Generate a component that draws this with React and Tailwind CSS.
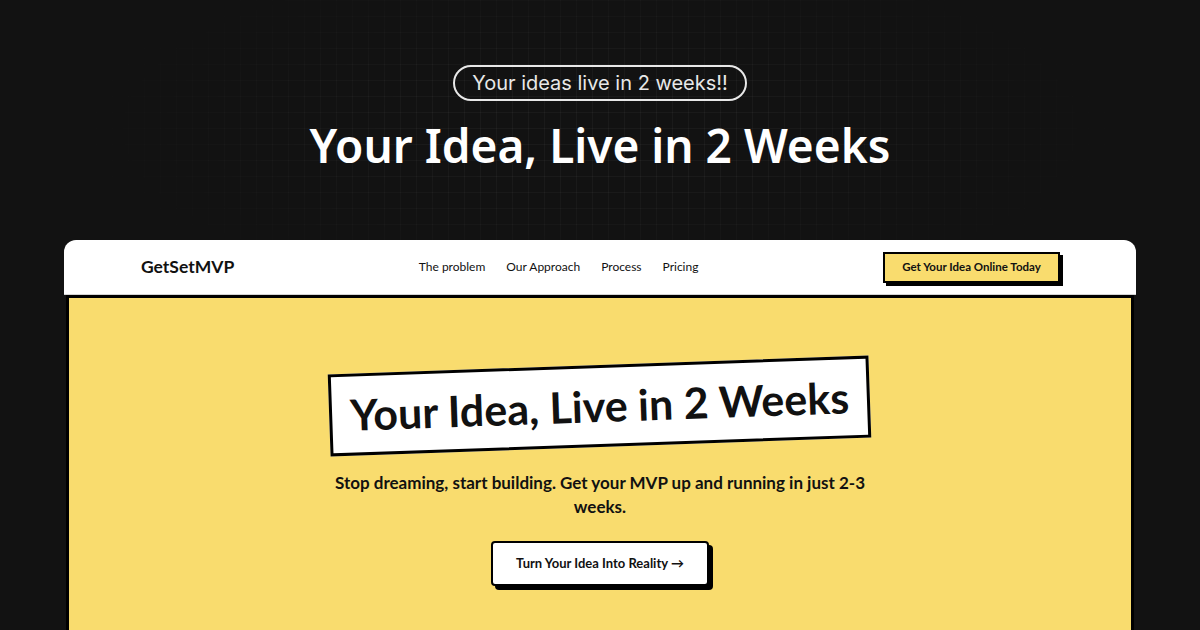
import React from "react";

const links = ["The problem", "Our Approach", "Process", "Pricing"];

function Nav() {
  return (
    <div className="flex h-[55px] items-center justify-between rounded-t-[12px] border-b border-[#d4d4d4] bg-white pl-[77px] pr-[76px]">
      <div className="font-['Lato'] text-[17.5px] font-bold text-[#111]">GetSetMVP</div>
      <nav className="flex gap-[21px] font-['Lato'] text-[12px] text-[#111]">
        {links.map((l) => (
          <span key={l}>{l}</span>
        ))}
      </nav>
      <button className="h-[31px] w-[177px] border-2 border-black bg-[#f9dc6e] font-['Lato'] text-[11.5px] font-bold text-[#111] shadow-[3px_3px_0_#000]">
        Get Your Idea Online Today
      </button>
    </div>
  );
}

export default function App() {
  return (
    <div className="relative h-[630px] w-[1200px] overflow-hidden bg-[#121212]">
      {/* faint grid glow behind the heading */}
      <div className="pointer-events-none absolute inset-x-0 top-0 h-[320px] bg-[linear-gradient(rgba(255,255,255,0.035)_1px,transparent_1px),linear-gradient(90deg,rgba(255,255,255,0.035)_1px,transparent_1px)] bg-[size:16px_16px] [mask-image:radial-gradient(ellipse_45%_60%_at_50%_40%,#000_30%,transparent_100%)]" />

      <div className="relative flex flex-col items-center pt-[65px]">
        <div className="flex h-[36px] items-center rounded-full border-2 border-[#e8e8e8] px-[17px] font-['Inter'] text-[20px] text-[#e8e8e8]">
          Your ideas live in 2 weeks!!
        </div>
        <h1 className="mt-[12px] font-['Noto_Sans'] text-[46px] font-semibold leading-[64px] text-white">
          Your Idea, Live in 2 Weeks
        </h1>
      </div>

      <div className="relative mx-[64px] mt-[63px]">
        <Nav />
        <div className="mx-[2px] h-[400px] border-[3px] border-b-0 border-black bg-[#f9dc6e]">
          <div className="flex flex-col items-center pt-[67px]">
            <div className="-rotate-2 border-[3px] border-black bg-white px-[18px] py-[14px]">
              <h2 className="font-['Lato'] text-[43px] font-bold leading-[48px] text-[#111]">
                Your Idea, Live in 2 Weeks
              </h2>
            </div>
            <p className="mt-[24px] w-[560px] text-center font-['Lato'] text-[17px] font-bold leading-[24px] text-[#111]">
              Stop dreaming, start building. Get your MVP up and running in just 2-3 weeks.
            </p>
            <button className="mt-[22px] h-[45px] w-[218px] rounded-[4px] border-2 border-black bg-white font-['Lato'] text-[13px] font-bold text-[#111] shadow-[4px_4px_0_#000]">
              Turn Your Idea Into Reality →
            </button>
          </div>
        </div>
      </div>
    </div>
  );
}
